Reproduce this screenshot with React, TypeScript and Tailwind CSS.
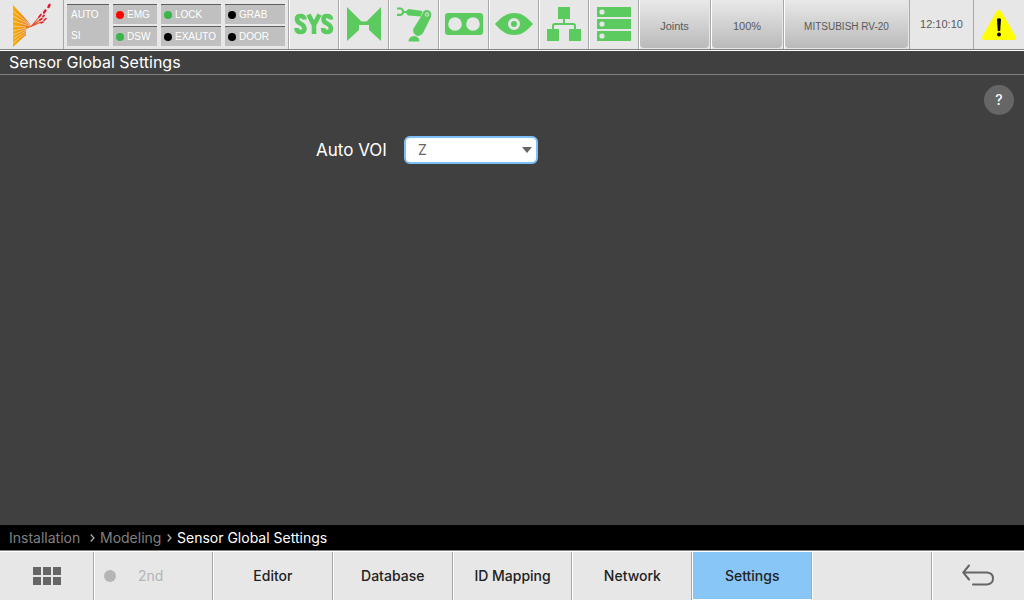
import type { ReactNode } from 'react';

type Lamp = { label: string; color: string };

const lampColumns: { width: string; lamps: Lamp[] }[] = [
  { width: 'w-11', lamps: [{ label: 'EMG', color: 'bg-[#ff0000]' }, { label: 'DSW', color: 'bg-[#39b54a]' }] },
  { width: 'w-[60px]', lamps: [{ label: 'LOCK', color: 'bg-[#39b54a]' }, { label: 'EXAUTO', color: 'bg-black' }] },
  { width: 'w-[60px]', lamps: [{ label: 'GRAB', color: 'bg-black' }, { label: 'DOOR', color: 'bg-black' }] },
];

function Logo() {
  return (
    <svg viewBox="0 0 42 46" className="h-[46px] w-[42px]" role="img" aria-label="Home">
      <defs>
        <linearGradient id="wing" x1="0" x2="1" y1="0" y2="0">
          <stop offset="0" stopColor="#fbb000" />
          <stop offset="0.6" stopColor="#f08a10" />
          <stop offset="1" stopColor="#e2572b" />
        </linearGradient>
      </defs>
      <path d="M2 3L14 16L21 24.5L15 27V33L2 45Z" fill="url(#wing)" />
      <g stroke="#e7e7e7" fill="none" strokeWidth="0.6">
        <path d="M2 9L21 24M2 14L21 24M2 19L19 24M2 24L15 25M2 29L15 26M2 33L15 27.500M2 37L15 29M2 41L15 31" />
      </g>
      <g stroke="#e2572b" strokeWidth="1.1" fill="none">
        <path d="M20 24.500L29 14M20 24.500L30 17M20 24.500L30 20" />
      </g>
      <g stroke="#df1f2d" strokeLinecap="round" fill="none">
        <path d="M37.500 5L38.500 3" strokeWidth="2.6" />
        <path d="M33 10.500L34.500 8.500" strokeWidth="2.4" />
        <path d="M28 15L30 12.500M32 14.500L33 13.500" strokeWidth="1.8" />
        <path d="M29 18L31 16.500M33 18.500L35 16.500M30 21L32 20" strokeWidth="1.6" />
      </g>
    </svg>
  );
}

function SystemIcon() {
  return (
    <svg viewBox="0 0 40 24" className="h-6 w-10" fill="none" stroke="#5ccb5f" strokeWidth="4.6">
      <path d="M10.5 7.5Q10.5 4 6.5 4T3 7Q3 10 6.5 11.5T10.5 16.5Q10.5 20 6.5 20T2.5 16" />
      <path d="M14.5 2.5L20 13L25.5 2.5M20 12V22" />
      <path d="M37 7.5Q37 4 33 4T29.5 7Q29.5 10 33 11.5T37 16.5Q37 20 33 20T29 16" />
    </svg>
  );
}

function MirrorIcon() {
  return (
    <svg viewBox="0 0 34 34" className="size-[34px]" fill="#5ccb5f">
      <path d="M0 0L14 14Q17 16 20 14L34 0V34L22 23V18L17 16.5L12 18V23L0 34Z" />
      <path d="M12 18L15 14.500H19L22 18Z" />
    </svg>
  );
}

function RobotIcon() {
  return (
    <svg viewBox="0 0 36 36" className="size-9" fill="#5ccb5f">
      <path d="M1 2.5H4A3.2 3.2 0 0 1 4 8.900H1" fill="none" stroke="#5ccb5f" strokeWidth="2.2" />
      <path d="M7 5H10L12.5 3L26.5 5L25 10.5L12 9.5L10 7H7Z" />
      <path d="M26 9Q27 4 31 4Q36.500 5 35 11L27 27Q24.500 31 20 29.500Q16 27 17.500 22.500Z" />
      <circle cx="31" cy="8.500" r="1.700" fill="none" stroke="#e7e7e7" strokeWidth="1" />
      <path d="M12.500 35.500A5.500 5.500 0 0 1 23.500 35.500Z" />
    </svg>
  );
}

function TapeIcon() {
  return (
    <svg viewBox="0 0 38 22" className="h-[22px] w-[38px]">
      <rect width="38" height="22" rx="3" fill="#5ccb5f" />
      <circle cx="10" cy="11" r="6.8" fill="#e7e7e7" />
      <circle cx="28" cy="11" r="6.8" fill="#e7e7e7" />
    </svg>
  );
}

function EyeIcon() {
  return (
    <svg viewBox="0 0 38 22" className="h-[22px] w-[38px]">
      <path d="M0 11C7 3 12 0 19 0S31 3 38 11C31 19 26 22 19 22S7 19 0 11Z" fill="#5ccb5f" />
      <circle cx="19" cy="11" r="4.5" fill="#5ccb5f" stroke="#e7e7e7" strokeWidth="3" />
    </svg>
  );
}

function TreeIcon() {
  return (
    <svg viewBox="0 0 34 34" className="size-[34px]" fill="#5ccb5f">
      <path d="M11 0H23V12H11ZM0 22H12V34H0ZM22 22H34V34H22Z" />
      <path d="M17 12V17M6 22V19Q6 17 8 17H26Q28 17 28 19V22" fill="none" stroke="#5ccb5f" strokeWidth="2" />
    </svg>
  );
}

function RackIcon() {
  return (
    <svg viewBox="0 0 34 34" className="size-[34px]">
      <path d="M0 0H34V10H0ZM0 12H34V22H0ZM0 24H34V34H0Z" fill="#5ccb5f" />
      <g fill="#e7e7e7">
        <circle cx="5" cy="5" r="2.6" />
        <circle cx="5" cy="17" r="2.6" />
        <circle cx="5" cy="29" r="2.6" />
      </g>
    </svg>
  );
}

function WarningIcon() {
  return (
    <svg viewBox="0 0 34 30" className="h-[30px] w-[34px]">
      <path d="M14.5 1.5Q17-1.5 19.5 1.5L33.5 26Q35 30 31.5 30H2.5Q-1 30 .5 26Z" fill="#ffff00" />
      <path d="M15 9Q17 7.5 19 9L18.2 21H15.8Z" fill="#000" />
      <circle cx="17" cy="24.5" r="2" fill="#000" />
    </svg>
  );
}

function GridIcon() {
  return (
    <svg viewBox="0 0 28 18" className="h-[18px] w-7" fill="#666">
      <path d="M0 0H8V8H0ZM10 0H18V8H10ZM20 0H28V8H20ZM0 10H8V18H0ZM10 10H18V18H10ZM20 10H28V18H20Z" />
    </svg>
  );
}

function ReturnIcon() {
  return (
    <svg viewBox="0 0 32 22" className="h-[22px] w-8" fill="none" stroke="#666" strokeWidth="2" strokeLinecap="round">
      <path d="M7 1.5L1.2 8.5L7 15.5M1.5 8.5H25Q31 9 31 14.5T25 20.5H11" />
    </svg>
  );
}

function Chevron() {
  return (
    <svg viewBox="0 0 5 8" className="h-2 w-[5px]" fill="none" stroke="#a8a8a8" strokeWidth="1.3" aria-hidden="true">
      <path d="M.7 .5L4 4L.7 7.5" />
    </svg>
  );
}

function IconButton({ label, children }: { label: string; children: ReactNode }) {
  return (
    <button aria-label={label} className="flex w-[50px] shrink-0 items-center justify-center border-r border-l border-r-[#a8a8a8] border-l-white pb-px">
      {children}
    </button>
  );
}

function GradientButton({ className, children }: { className: string; children: ReactNode }) {
  return (
    <div className={`flex shrink-0 border-r border-l border-r-[#a8a8a8] border-l-white pr-px pb-px ${className}`}>
      <button className="w-full rounded-sm bg-linear-to-b from-[#e9e9e9] to-[#bababa] pt-1 font-['Liberation_Sans',sans-serif] text-[#595959]">
        {children}
      </button>
    </div>
  );
}

function FooterButton({ children, active = false }: { children?: ReactNode; active?: boolean }) {
  return (
    <button
      aria-current={active ? 'page' : undefined}
      className={`min-w-0 flex-1 border-r border-l border-r-[#a8a8a8] border-l-white text-sm font-medium text-[#222] ${active ? 'border-b border-b-white bg-[#88c6f8]' : ''}`}
    >
      {children}
    </button>
  );
}

export default function App() {
  return (
    <div className="flex min-h-screen flex-col bg-[#404040] font-['Inter','Liberation_Sans',sans-serif] text-white">
      <header className="flex h-[51px] shrink-0 border-b border-white bg-[#e7e7e7]">
        <div className="flex min-w-0 flex-1 border-b border-[#808080]">
          <button className="flex w-16 shrink-0 items-center justify-center border-r border-[#a8a8a8]">
            <Logo />
          </button>
          <div className="flex shrink-0 gap-1 border-r border-[#a8a8a8] px-[3px] pt-1 pb-[3px] font-['Liberation_Sans',sans-serif] text-[10px] leading-5">
            <div className="flex w-[42px] flex-col justify-between border-t border-[#606060] bg-[#c0c0c0] pl-1">
              <span>AUTO</span>
              <span>SI</span>
            </div>
            {lampColumns.map((column) => (
              <div key={column.lamps[0].label} className={`flex flex-col gap-0.5 ${column.width}`}>
                {column.lamps.map((lamp) => (
                  <div key={lamp.label} className="flex flex-1 items-center gap-[3px] border-t border-[#606060] bg-[#c0c0c0] pl-[3px] leading-[18px]">
                    <span className={`size-2 shrink-0 rounded-full ${lamp.color}`} />
                    <span>{lamp.label}</span>
                  </div>
                ))}
              </div>
            ))}
          </div>
          <IconButton label="System"><SystemIcon /></IconButton>
          <IconButton label="Calibration"><MirrorIcon /></IconButton>
          <IconButton label="Robot"><RobotIcon /></IconButton>
          <IconButton label="Recorder"><TapeIcon /></IconButton>
          <IconButton label="Vision"><EyeIcon /></IconButton>
          <IconButton label="Network"><TreeIcon /></IconButton>
          <IconButton label="Database"><RackIcon /></IconButton>
          <GradientButton className="w-[72px] text-[11px]">Joints</GradientButton>
          <GradientButton className="w-[73px] text-[11px]">100%</GradientButton>
          <GradientButton className="w-[126px] text-[10px]">MITSUBISH RV-20</GradientButton>
          <time className="flex min-w-0 flex-1 items-center justify-center border-r border-[#a8a8a8] font-['Liberation_Sans',sans-serif] text-[11px] text-[#595959]">12:10:10</time>
          <button aria-label="Warnings" className="flex w-[50px] shrink-0 items-center justify-center">
            <WarningIcon />
          </button>
        </div>
      </header>

      <h1 className="h-6 shrink-0 border-b border-[#808080] pl-[9px] text-base leading-[22px]">Sensor Global Settings</h1>

      <main className="flex-1 px-2.5 pt-2.5">
        <div className="flex justify-end">
          <button aria-label="Help" className="size-[30px] rounded-full bg-[#666] text-sm font-medium">?</button>
        </div>
        <div className="mt-[21px] flex items-center pl-[306px]">
          <label htmlFor="auto-voi" className="w-[88px] text-[17px] leading-6">Auto VOI</label>
          <div className="grid w-[134px] items-center">
            <select
              id="auto-voi"
              defaultValue="Z"
              className="col-start-1 row-start-1 h-7 w-full appearance-none rounded-md border-2 border-[#7cc0fb] bg-white pl-3 text-sm text-[#666] outline-none"
            >
              <option>X</option>
              <option>Y</option>
              <option>Z</option>
            </select>
            <svg viewBox="0 0 10 6" className="pointer-events-none col-start-1 row-start-1 mr-1.5 h-1.5 w-2.5 justify-self-end" fill="#666">
              <path d="M0 0H10L5 6Z" />
            </svg>
          </div>
        </div>
      </main>

      <nav aria-label="Breadcrumb" className="flex h-[25px] shrink-0 items-center gap-[5px] bg-black pl-[9px] text-sm text-[#808080]">
        <a href="#installation" className="min-w-[76px]">Installation</a>
        <Chevron />
        <a href="#modeling" className="min-w-[62px]">Modeling</a>
        <Chevron />
        <span className="text-white">Sensor Global Settings</span>
      </nav>

      <footer className="flex h-[50px] shrink-0 border-t border-[#808080] bg-[#e7e7e7]">
        <div className="flex min-w-0 flex-1 border-t border-white">
          <button aria-label="Menu" className="flex w-[94px] shrink-0 items-center justify-center border-r border-[#a8a8a8] pb-px">
            <GridIcon />
          </button>
          <button disabled className="flex w-[119px] shrink-0 items-center gap-[22px] border-r border-l border-r-[#a8a8a8] border-l-white pl-[9px] text-sm text-[#b5b5b5]">
            <span className="size-3 rounded-full bg-[#b5b5b5]" />
            2nd
          </button>
          <FooterButton>Editor</FooterButton>
          <FooterButton>Database</FooterButton>
          <FooterButton>ID Mapping</FooterButton>
          <FooterButton>Network</FooterButton>
          <FooterButton active>Settings</FooterButton>
          <FooterButton />
          <button aria-label="Back" className="flex w-[92px] shrink-0 items-center justify-center border-l border-white pb-0.5">
            <ReturnIcon />
          </button>
        </div>
      </footer>
    </div>
  );
}
